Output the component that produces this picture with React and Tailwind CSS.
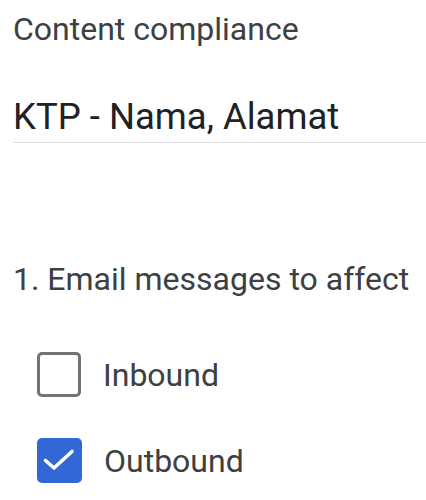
import React, { useState } from 'react';

const Checkbox = ({ checked, label, onChange }) => (
    <label className="flex items-center gap-[22px] cursor-pointer">
        {checked ? (
            <span className="w-[45px] h-[45px] rounded-[5px] bg-[#3367d6] shrink-0 block">
                <svg width="45" height="45" viewBox="0 0 45 45" fill="none">
                    <path d="M8.5 22.5L17 30L35 13.5" stroke="#ffffff" strokeWidth="3.6" strokeLinecap="round" strokeLinejoin="round" />
                </svg>
            </span>
        ) : (
            <span className="w-[44px] h-[45px] rounded-[5px] border-[3px] border-[#737373] bg-white shrink-0 block" />
        )}
        <input type="checkbox" className="hidden" checked={checked} onChange={onChange} />
        <span className="text-[32px] leading-[40px] text-[#3c4043]">{label}</span>
    </label>
);

export default function App() {
    const [inbound, setInbound] = useState(false);
    const [outbound, setOutbound] = useState(true);

    return (
        <div className="w-[426px] h-[500px] bg-white overflow-hidden pl-[13px] font-['Roboto',sans-serif]">
            <div className="pt-[9px] text-[32px] leading-[40px] text-[#3c4043]">Content compliance</div>

            <div className="mt-[46px] pb-[3px] border-b border-[#dadce0] text-[36.5px] leading-[44px] text-[#202124]">
                KTP - Nama, Alamat
            </div>

            <div className="mt-[116px] text-[32px] leading-[40px] text-[#3c4043]">1. Email messages to affect</div>

            <div className="mt-[53px] pl-[24px] flex flex-col gap-[41px]">
                <Checkbox checked={inbound} label="Inbound" onChange={() => setInbound(v => !v)} />
                <Checkbox checked={outbound} label="Outbound" onChange={() => setOutbound(v => !v)} />
            </div>
        </div>
    );
}
